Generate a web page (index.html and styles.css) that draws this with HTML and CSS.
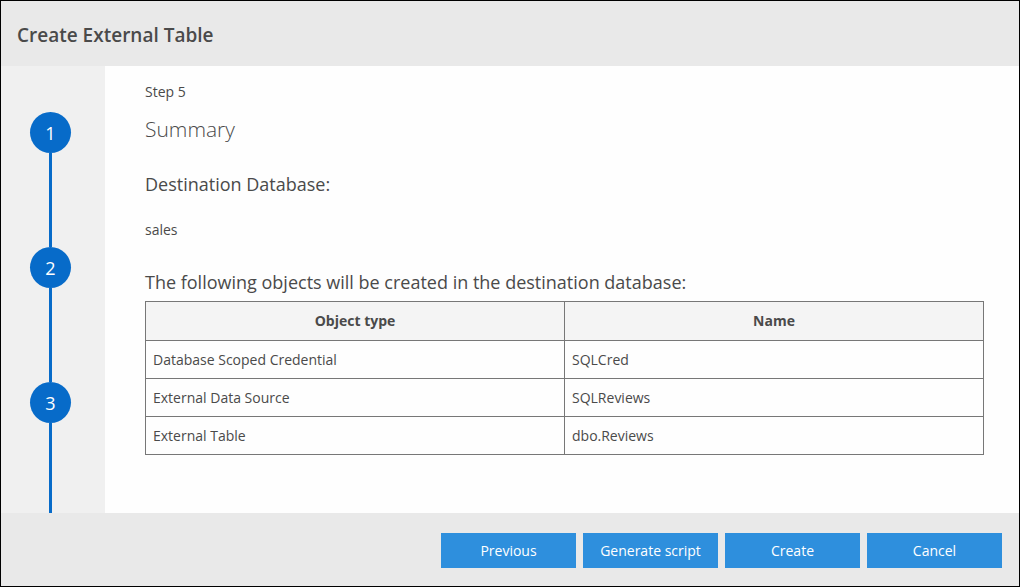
FILE: index.html
```html
<!DOCTYPE html>
<html lang="en">
<head>
<meta charset="utf-8">
<title>Create External Table</title>
<link rel="stylesheet" href="styles.css">
</head>
<body>
<div class="wizard">
  <header class="wizard-header"><h1 class="wizard-title">Create External Table</h1></header>
  <div class="wizard-body">
    <nav class="steps" aria-label="Steps">
      <ol class="step-list">
        <li class="step"><button type="button" class="step-dot">1</button></li>
        <li class="step"><button type="button" class="step-dot">2</button></li>
        <li class="step"><button type="button" class="step-dot">3</button></li>
      </ol>
    </nav>
    <main class="content">
      <p class="step-label">Step 5</p>
      <h2 class="page-title">Summary</h2>
      <h3 class="section-title">Destination Database:</h3>
      <p class="database">sales</p>
      <h3 class="section-title">The following objects will be created in the destination database:</h3>
      <table class="objects">
        <thead><tr><th scope="col">Object type</th><th scope="col">Name</th></tr></thead>
        <tbody>
          <tr><td>Database Scoped Credential</td><td>SQLCred</td></tr>
          <tr><td>External Data Source</td><td>SQLReviews</td></tr>
          <tr><td>External Table</td><td>dbo.Reviews</td></tr>
        </tbody>
      </table>
    </main>
  </div>
  <footer class="wizard-footer">
    <button type="button" class="action">Previous</button>
    <button type="button" class="action">Generate script</button>
    <button type="button" class="action">Create</button>
    <button type="button" class="action">Cancel</button>
  </footer>
</div>
</body>
</html>
```
FILE: styles.css
```css
* { box-sizing: border-box; }

body {
  margin: 0;
  font-family: "Segoe UI", "Open Sans", "Noto Sans", sans-serif;
  font-size: 14px;
  line-height: 20px;
  color: #4a4a4a;
}

h1, h2, h3, p { margin: 0; }

button {
  border: 0;
  padding: 0;
  font: inherit;
  color: #fff;
  cursor: pointer;
}

.wizard {
  display: flex;
  flex-direction: column;
  min-height: 100vh;
  border: 1px solid #000;
  background: #e9e9e9;
}

.wizard-header { padding: 22px 16px 18px; }

.wizard-title {
  font-size: 19px;
  line-height: 25px;
  font-weight: 600;
}

.wizard-body {
  flex: 1;
  display: flex;
}

.steps {
  flex: none;
  width: 104px;
  padding: 46px 0 0 29px;
  background: #f0f0f0;
}

.step-list {
  display: flex;
  flex-direction: column;
  height: 100%;
  margin: 0;
  padding: 0;
  list-style: none;
}

.step {
  display: flex;
  flex-direction: column;
  align-items: center;
  width: 41px;
  height: 135px;
}

.step::after {
  content: "";
  flex: 1;
  width: 3px;
  background: #076bc9;
}

.step:last-child {
  flex: 1;
  height: auto;
}

.step-dot {
  width: 41px;
  height: 41px;
  border-radius: 50%;
  background: #076bc9;
  font-size: 18px;
}

.content {
  flex: 1;
  padding: 16px 35px 32px 40px;
  background: #fefefe;
}

.page-title {
  margin-top: 12px;
  font-size: 21px;
  line-height: 30px;
  font-weight: 300;
}

.section-title {
  margin-top: 28px;
  font-size: 18px;
  line-height: 24px;
  font-weight: 400;
}

.database {
  margin-top: 24px;
  margin-bottom: 30px;
}

.database + .section-title { margin-top: 0; }

.objects {
  width: 100%;
  margin-top: 7px;
  border-collapse: collapse;
  table-layout: fixed;
}

.objects th,
.objects td {
  height: 38px;
  padding: 0 7px;
  border: 1px solid #777;
  text-align: left;
}

.objects th {
  height: 39px;
  background: #f4f4f4;
  font-weight: 700;
  text-align: center;
}

.wizard-footer {
  display: flex;
  justify-content: flex-end;
  gap: 7px;
  padding: 20px 17px 18px;
}

.action {
  width: 135px;
  height: 35px;
  background: #2e8fdd;
}
```
